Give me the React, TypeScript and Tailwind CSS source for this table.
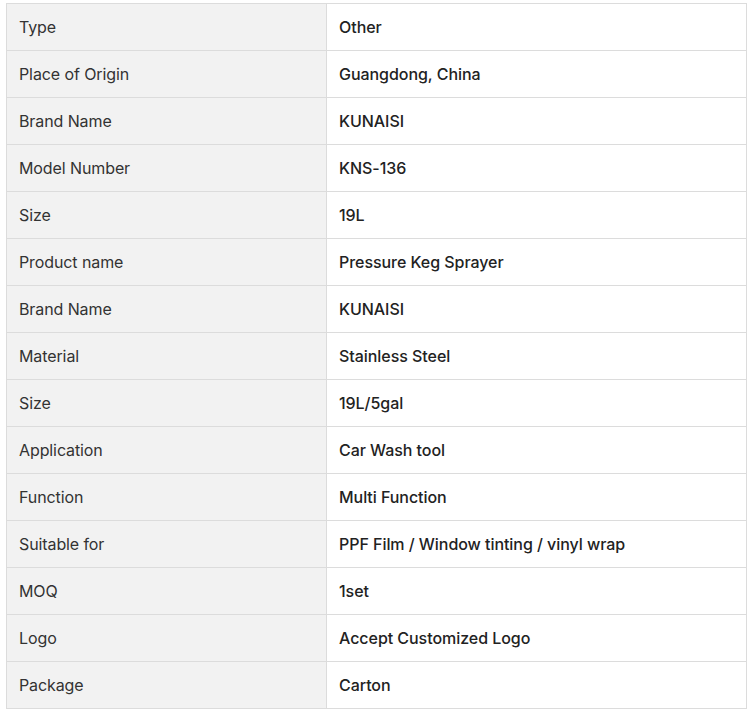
import React from "react";

const rows: [string, string][] = [
  ["Type", "Other"],
  ["Place of Origin", "Guangdong, China"],
  ["Brand Name", "KUNAISI"],
  ["Model Number", "KNS-136"],
  ["Size", "19L"],
  ["Product name", "Pressure Keg Sprayer"],
  ["Brand Name", "KUNAISI"],
  ["Material", "Stainless Steel"],
  ["Size", "19L/5gal"],
  ["Application", "Car Wash tool"],
  ["Function", "Multi Function"],
  ["Suitable for", "PPF Film / Window tinting / vinyl wrap"],
  ["MOQ", "1set"],
  ["Logo", "Accept Customized Logo"],
  ["Package", "Carton"],
];

export default function App() {
  return (
    <div className="bg-white pl-[6px] pt-[3px] w-[751px] h-[712px]" style={{ fontFamily: "Inter, 'Noto Sans', sans-serif" }}>
      <table className="w-[741px] border-collapse text-[16px]">
        <tbody>
          {rows.map(([k, v], i) => (
            <tr key={i} className="h-[47px]">
              <td className="w-[320px] border border-[#dcdcdc] bg-[#f2f2f2] pl-[12px] align-middle text-[#333] tracking-[-0.1px]">{k}</td>
              <td className="border border-[#dcdcdc] bg-white pl-[12px] align-middle font-medium text-[#222] tracking-[-0.05px]">{v}</td>
            </tr>
          ))}
        </tbody>
      </table>
    </div>
  );
}
